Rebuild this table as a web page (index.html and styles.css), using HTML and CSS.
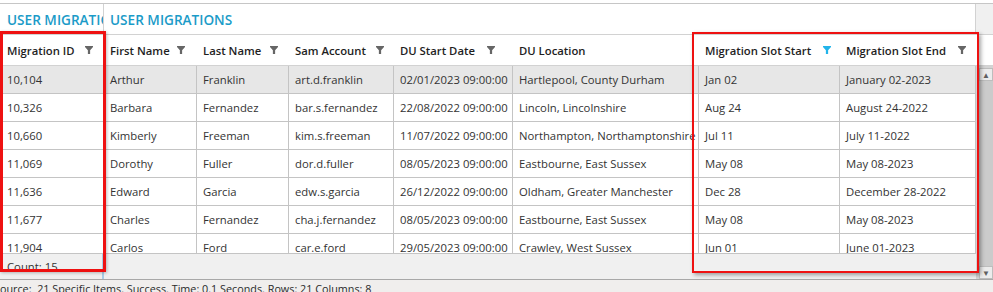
FILE: index.html
```html
<!DOCTYPE html>
<html>
<head>
<meta charset="utf-8">
<link rel="stylesheet" href="styles.css">
</head>
<body>
<div class="app">
  <div class="grid">
    <div class="main">
      <div class="titlebar">
        <div class="title frozen">USER MIGRATIONS</div>
        <div class="title rest">USER MIGRATIONS</div>
      </div>
      <div class="row head">
        <div class="hc c1"><span>Migration ID</span><i class="flt"></i></div>
        <div class="hc"><span>First Name</span><i class="flt f12"></i></div>
        <div class="hc"><span>Last Name</span><i class="flt f11"></i></div>
        <div class="hc"><span>Sam Account</span><i class="flt"></i></div>
        <div class="hc"><span>DU Start Date</span><i class="flt f18"></i></div>
        <div class="hc"><span>DU Location</span></div>
        <div class="hc"><span>Migration Slot Start</span><i class="flt on f9"></i></div>
        <div class="hc last"><span>Migration Slot End</span><i class="flt"></i></div>
      </div>
      <div class="body">
        <div class="row sel"><div class="c c1">10,104</div><div class="c">Arthur</div><div class="c">Franklin</div><div class="c">art.d.franklin</div><div class="c">02/01/2023 09:00:00</div><div class="c">Hartlepool, County Durham</div><div class="c">Jan 02</div><div class="c">January 02-2023</div></div>
        <div class="row"><div class="c c1">10,326</div><div class="c">Barbara</div><div class="c">Fernandez</div><div class="c">bar.s.fernandez</div><div class="c">22/08/2022 09:00:00</div><div class="c">Lincoln, Lincolnshire</div><div class="c">Aug 24</div><div class="c">August 24-2022</div></div>
        <div class="row"><div class="c c1">10,660</div><div class="c">Kimberly</div><div class="c">Freeman</div><div class="c">kim.s.freeman</div><div class="c">11/07/2022 09:00:00</div><div class="c">Northampton, Northamptonshire</div><div class="c">Jul 11</div><div class="c">July 11-2022</div></div>
        <div class="row"><div class="c c1">11,069</div><div class="c">Dorothy</div><div class="c">Fuller</div><div class="c">dor.d.fuller</div><div class="c">08/05/2023 09:00:00</div><div class="c">Eastbourne, East Sussex</div><div class="c">May 08</div><div class="c">May 08-2023</div></div>
        <div class="row"><div class="c c1">11,636</div><div class="c">Edward</div><div class="c">Garcia</div><div class="c">edw.s.garcia</div><div class="c">26/12/2022 09:00:00</div><div class="c">Oldham, Greater Manchester</div><div class="c">Dec 28</div><div class="c">December 28-2022</div></div>
        <div class="row"><div class="c c1">11,677</div><div class="c">Charles</div><div class="c">Fernandez</div><div class="c">cha.j.fernandez</div><div class="c">08/05/2023 09:00:00</div><div class="c">Eastbourne, East Sussex</div><div class="c">May 08</div><div class="c">May 08-2023</div></div>
        <div class="row"><div class="c c1">11,904</div><div class="c">Carlos</div><div class="c">Ford</div><div class="c">car.e.ford</div><div class="c">29/05/2023 09:00:00</div><div class="c">Crawley, West Sussex</div><div class="c">Jun 01</div><div class="c">June 01-2023</div></div>
      </div>
      <div class="footer">
        <div class="fc c1">Count: 15</div>
        <div class="fc rest"></div>
      </div>
    </div>
    <div class="vscroll">
      <div class="vs-title"></div>
      <div class="vs-head"></div>
      <div class="vs-track">
        <div class="vs-btn">&#9650;</div>
        <div class="vs-thumb"></div>
        <div class="vs-btn">&#9660;</div>
      </div>
    </div>
  </div>
  <div class="status"><span class="status-text">Source:&nbsp; 21 Specific Items. Success. Time: 0.1 Seconds. Rows: 21 Columns: 8</span></div>
</div>
<div class="mark mark-a"></div>
<div class="mark mark-b"></div>
</body>
</html>
```

FILE: styles.css
```css
* { box-sizing: border-box; }

html, body {
  margin: 0;
  padding: 0;
}

body {
  width: 993px;
  height: 292px;
  overflow: hidden;
  position: relative;
  background: #ffffff;
  font-family: "Segoe UI", "Open Sans", "Noto Sans", sans-serif;
  font-size: 11.3px;
  color: #333333;
}

.app {
  display: flex;
  flex-direction: column;
  height: 292px;
  padding-top: 3px;
}

.grid {
  display: flex;
  height: 276px;
  border-top: 1px solid #c6c6c6;
}

.main {
  width: 976px;
  display: flex;
  flex-direction: column;
}

.titlebar {
  height: 31px;
  display: grid;
  grid-template-columns: 104px 872px;
  border-bottom: 1px solid #d2d2d2;
}

.title {
  font-size: 13.6px;
  font-weight: 600;
  color: #1b9bc8;
  white-space: nowrap;
  overflow: hidden;
  display: flex;
  align-items: center;
  padding-left: 7px;
}

.title.frozen {
  border-right: 1px solid #d2d2d2;
}

.title.rest {
  padding-left: 6px;
  border-right: 1px solid #d2d2d2;
}

.row {
  display: grid;
  grid-template-columns: 104px 93px 92px 105px 119px 186px 141px 136px;
}

.head {
  height: 31px;
  border-bottom: 1px solid #d2d2d2;
}

.hc {
  display: flex;
  align-items: center;
  padding-left: 6px;
  font-weight: 600;
  color: #1e1e1e;
  white-space: nowrap;
  overflow: hidden;
}

.hc span {
  flex: 1;
  overflow: hidden;
}

.hc.c1 {
  padding-left: 7px;
  border-right: 1px solid #a9cce6;
}

.flt {
  width: 8px;
  height: 8px;
  margin-right: 10px;
  flex: none;
  background: #666666;
  clip-path: polygon(0 0, 100% 0, 100% 14%, 64% 52%, 64% 100%, 36% 100%, 36% 52%, 0 14%);
}

.flt.on { background: #22b4ea; }
.flt.f9 { margin-right: 9px; }
.flt.f11 { margin-right: 11px; }
.flt.f12 { margin-right: 12px; }
.flt.f18 { margin-right: 18px; }

.body {
  height: 187px;
  overflow: hidden;
}

.body .row {
  height: 28px;
  border-bottom: 1px solid #c4c4c4;
}

.body .row.sel {
  background: #e7e7e7;
}

.c {
  display: flex;
  align-items: center;
  padding-left: 6px;
  border-right: 1px solid #c4c4c4;
  white-space: nowrap;
  overflow: hidden;
  color: #333333;
}

.c.c1 {
  padding-left: 7px;
  border-right: 1px solid #a9cce6;
}

.footer {
  height: 26px;
  border-top: 1px solid #c4c4c4;
  background: #f0f0f0;
  display: grid;
  grid-template-columns: 104px 872px;
}

.fc {
  display: flex;
  align-items: center;
  padding-left: 7px;
  color: #333333;
  white-space: nowrap;
}

.fc.c1 {
  border-right: 2px solid #a9cce6;
}

.vscroll {
  width: 17px;
  display: flex;
  flex-direction: column;
}

.vs-title {
  height: 31px;
  background: #f0f0f0;
  border-bottom: 1px solid #d2d2d2;
}

.vs-head {
  height: 31px;
  background: #ffffff;
  border-bottom: 1px solid #d2d2d2;
}

.vs-track {
  flex: 1;
  background: #d4d4d4;
  display: flex;
  flex-direction: column;
  padding: 2px 0 0 3px;
}

.vs-btn {
  height: 13px;
  background: #ececec;
  border: 1px solid #bdbdbd;
  color: #606060;
  font-size: 8px;
  line-height: 11px;
  text-align: center;
}

.vs-thumb {
  flex: 1;
  background: #cbcbcb;
}

.status {
  flex: 1;
  border-top: 1px solid #a8a8a8;
  background: #f0eeed;
  overflow: hidden;
}

.status-text {
  display: block;
  margin-left: -6px;
  font-size: 10.8px;
  line-height: 16px;
  padding-top: 1px;
  color: #2a2a2a;
  white-space: nowrap;
}

.mark {
  position: absolute;
  border-style: solid;
  border-color: #ee1111;
  pointer-events: none;
}

.mark-a {
  left: 0;
  top: 31px;
  width: 106px;
  height: 241px;
  border-width: 3px;
  box-shadow: 1px 1px 3px rgba(0, 0, 0, 0.25);
}

.mark-b {
  left: 692px;
  top: 32px;
  width: 287px;
  height: 241px;
  border-width: 2px;
  box-shadow: 2px 2px 4px rgba(0, 0, 0, 0.35);
}
```
